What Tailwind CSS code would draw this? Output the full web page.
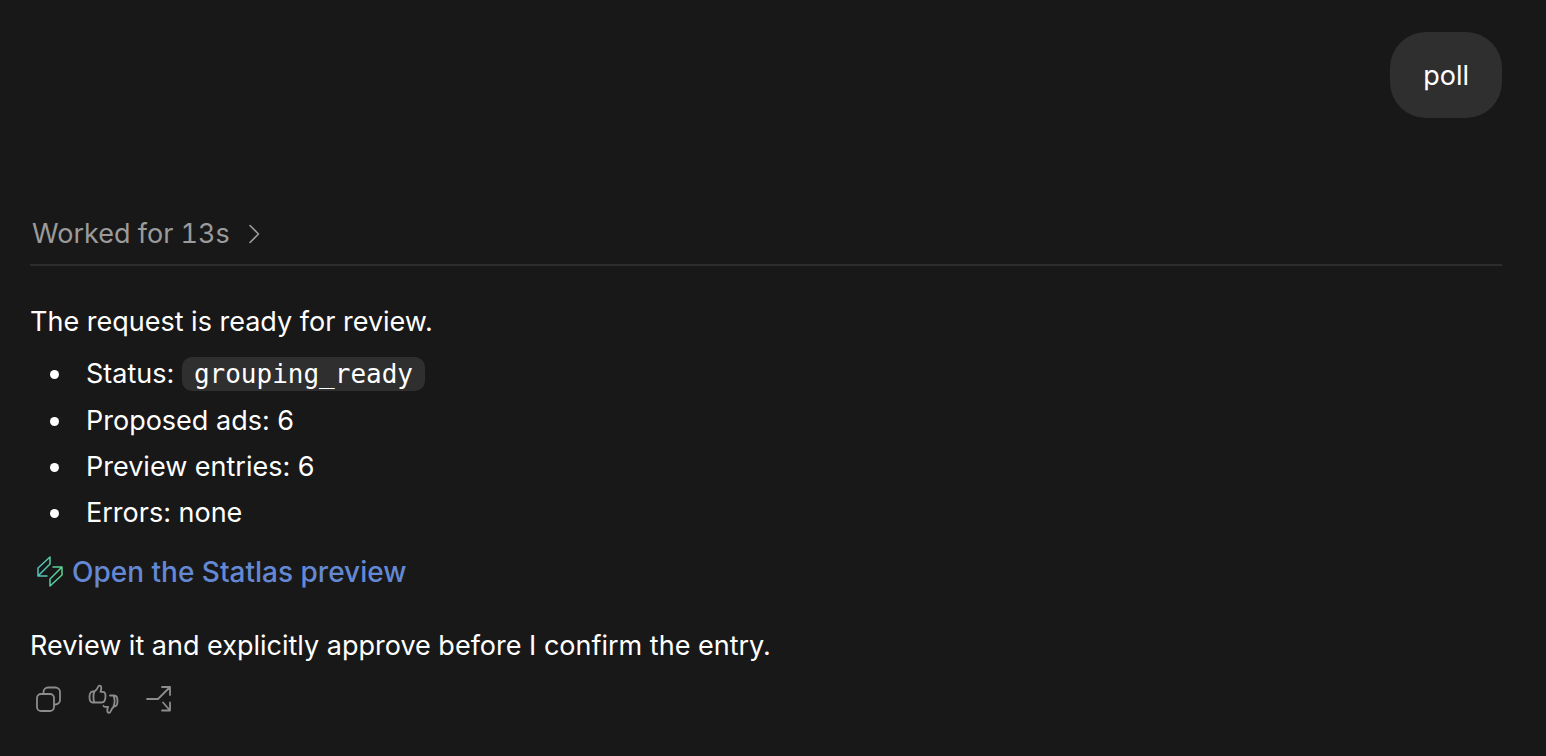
<!DOCTYPE html>
<html lang="en">
<head>
  <meta charset="UTF-8" />
  <meta name="viewport" content="width=device-width, initial-scale=1.0" />
  <title>Chat</title>
  <script src="https://cdn.jsdelivr.net/npm/@tailwindcss/browser@4"></script>
</head>
<body class="min-h-screen bg-[#181818] font-['Inter',sans-serif] text-[27px] leading-[46px] text-white">

  <main class="pt-8 pr-11 pb-8 pl-[30px]">

    <!-- User message -->
    <div class="flex justify-end">
      <p class="rounded-[36px] bg-[#2f2f2f] px-[33px] pt-[21px] pb-[19px]">poll</p>
    </div>

    <!-- Work summary -->
    <div class="mt-[93px] border-b-2 border-[#2d2d2d] pb-[7px]">
      <button type="button" class="flex items-center gap-[18px] pl-0.5 text-[#9b9b9b] tabular-nums">
        <span>Worked for 13s</span>
        <svg class="h-5 w-3" viewBox="0 0 12 20" fill="none" stroke="currentColor" stroke-width="1.6" stroke-linecap="round" stroke-linejoin="round" aria-hidden="true">
          <path d="M2 1.5 10.500 10 2 18.500" />
        </svg>
      </button>
    </div>

    <!-- Assistant message -->
    <article class="mt-[33px]">
      <p>The request is ready for review.</p>
      <ul class="mt-1.5 list-disc pl-11">
        <li class="mb-px pl-3">Status: <code class="rounded-[10px] bg-[#2f2f2f] px-3 py-0.5 font-['DejaVu_Sans_Mono',monospace] text-[26px]">grouping_ready</code></li>
        <li class="pl-3">Proposed ads: 6</li>
        <li class="pl-3">Preview entries: 6</li>
        <li class="pl-3">Errors: none</li>
      </ul>
      <p class="mt-[13px]">
        <a href="#" class="flex w-fit items-center gap-2 pl-1.5 text-[28px] font-medium text-[#6488d4]">
          <svg class="h-8 w-7" viewBox="0 0 28 32" fill="none" stroke="url(#logo)" stroke-width="1.5" stroke-linejoin="round" aria-hidden="true">
            <defs>
              <linearGradient id="logo" x1="0" y1="0" x2="28" y2="0" gradientUnits="userSpaceOnUse">
                <stop stop-color="#4fc0c0" />
                <stop offset="1" stop-color="#5fd38a" />
              </linearGradient>
            </defs>
            <path d="M14 1 2 12v8h9H2L14 8z" />
            <path d="M14 30l12-11v-8h-9h9L14 23z" />
          </svg>
          <span>Open the Statlas preview</span>
        </a>
      </p>
      <p class="mt-7">Review it and explicitly approve before I confirm the entry.</p>
    </article>

    <!-- Message actions -->
    <div class="mt-[15px] flex gap-6 pl-1 text-[#8c8c8c]">
      <button type="button" aria-label="Copy">
        <svg class="size-8" viewBox="0 0 32 32" fill="none" stroke="currentColor" stroke-width="1.8" aria-hidden="true">
          <rect x="3" y="10" width="17" height="17" rx="4" />
          <path d="M9.5 10V8A4.5 4.5 0 0 1 14 3.5h7.5A4.5 4.5 0 0 1 26 8v8a4.500 4.500 0 0 1-4.500 4.500H20" />
        </svg>
      </button>
      <button type="button" aria-label="Rate response">
        <svg class="size-8 overflow-visible" viewBox="2 0 32 32" fill="none" stroke="currentColor" stroke-width="1.8" stroke-linecap="round" stroke-linejoin="round" aria-hidden="true">
          <path d="M6.400 7.500H4.800C2.800 7.500 1.500 9.800 1.500 13s1.300 5.500 3.300 5.500h8.700c2.500 0 4-2.600 4-6.500 0-2.800-.8-4.200-2.700-4.200h-2.300c.5-1.400.8-2.700.8-3.800 0-1.500-.8-2.300-1.900-2.300-.7 0-1.100.5-1.400 1.300C9.200 5.300 7.600 6.500 6.400 7.500c-1.300 2.600-1.300 8 0 11" />
          <path d="M22 11.500h4c2 0 3.500 2.200 3.500 5.500s-1.500 5.500-3.500 5.500c-1.600 1.300-2.600 2.700-3.200 4.600-.3 1-.8 1.700-1.600 1.700-1.200 0-1.900-1-1.900-2.300 0-1.100.3-2.500.8-3.700h-2.900c-.8 0-1.400-.4-1.700-1M25.500 11.700c1.300 3 1.300 7.600 0 10.600" />
        </svg>
      </button>
      <button type="button" aria-label="Branch">
        <svg class="size-8" viewBox="0 0 32 32" fill="none" stroke="currentColor" stroke-width="1.8" stroke-linecap="round" stroke-linejoin="round" aria-hidden="true">
          <path d="M1 15h11L24 3M16 3h8v8M17 18.500l7 8M16 26.500h8v-8" />
        </svg>
      </button>
    </div>

  </main>

</body>
</html>
